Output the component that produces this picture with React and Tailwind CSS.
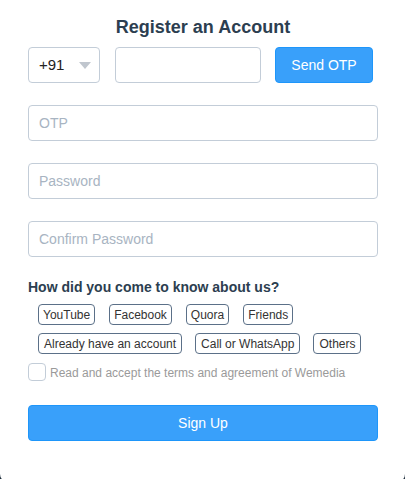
import React from "react";

const chips1 = ["YouTube", "Facebook", "Quora", "Friends"];
const chips2 = ["Already have an account", "Call or WhatsApp", "Others"];

function Chip({ label, wide }) {
  return (
    <span className={"h-[21px] flex items-center border border-[#5b7088] rounded-[4px] text-[12px] text-[#333] leading-none " + (wide ? "px-[5px]" : "px-[4px]")}>
      {label}
    </span>
  );
}

function Field({ placeholder }) {
  return (
    <input
      placeholder={placeholder}
      className="w-[350px] h-[36px] px-[10px] border border-[#c3cdd8] rounded-[4px] text-[14px] text-[#333] placeholder:text-[#a8b4c2] outline-none bg-white"
    />
  );
}

export default function App() {
  return (
    <div className="w-[405px] h-[479px] overflow-hidden bg-[#1f2f3d]" style={{ fontFamily: '"Liberation Sans", Arial, sans-serif' }}>
      <div className="w-[405px] h-[482px] bg-white rounded-b-[8px] pt-[15px] pl-[28px] flex flex-col">
        <h1 className="w-[350px] text-center text-[18px] leading-6 font-bold text-[#2c3e50] mb-[8px]">Register an Account</h1>
        <div className="flex items-center">
          <div className="w-[72px] h-[36px] border border-[#c3cdd8] rounded-[4px] flex items-center pl-[10px] pr-[8px] justify-between">
            <span className="text-[15px] text-[#222]">+91</span>
            <svg width="12" height="7" viewBox="0 0 12 7">
              <path d="M0 0 L12 0 L6 7 Z" fill="#c0c6ce" />
            </svg>
          </div>
          <input className="ml-[15px] w-[146px] h-[36px] border border-[#c3cdd8] rounded-[4px] outline-none px-[10px]" />
          <button className="ml-[14px] w-[98px] h-[36px] bg-[#39a0fa] border border-[#1e96fa] rounded-[4px] text-white text-[14px]">Send OTP</button>
        </div>
        <div className="mt-[22px] flex flex-col gap-[22px]">
          <Field placeholder="OTP" />
          <Field placeholder="Password" />
          <Field placeholder="Confirm Password" />
        </div>
        <p className="mt-[20px] text-[14px] leading-5 font-bold text-[#2c3e50]">How did you come to know about us?</p>
        <div className="mt-[7px] ml-[10px] flex flex-col gap-[8px]">
          <div className="flex gap-x-[14px]">
            {chips1.map((c) => <Chip key={c} label={c} />)}
          </div>
          <div className="flex gap-x-[13px]">
            {chips2.map((c) => <Chip key={c} label={c} wide />)}
          </div>
        </div>
        <label className="mt-[9px] flex items-center gap-[4px]">
          <span className="w-[18px] h-[18px] border border-[#c3cdd8] rounded-[4px] bg-white" />
          <span className="text-[12px] text-[#9a9a9a] translate-y-[1px]">Read and accept the terms and agreement of Wemedia</span>
        </label>
        <button className="mt-[24px] w-[350px] h-[36px] bg-[#39a0fa] border border-[#1e96fa] rounded-[4px] text-white text-[14px]">Sign Up</button>
      </div>
    </div>
  );
}
